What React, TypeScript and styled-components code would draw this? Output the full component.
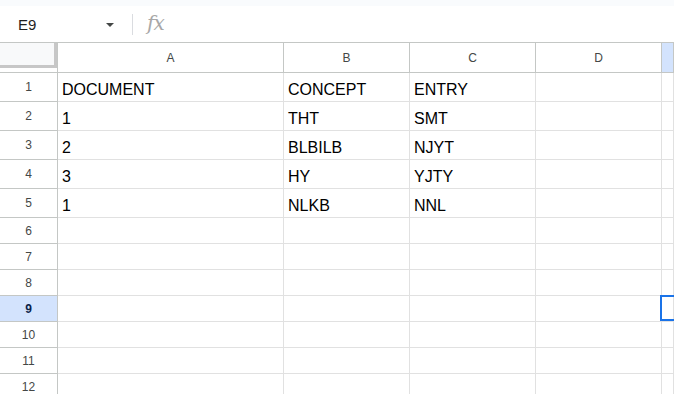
import React from "react";
import styled, { createGlobalStyle, css } from "styled-components";

const Global = createGlobalStyle`
  html, body { margin: 0; padding: 0; background: #fff; overflow: hidden; }
  body { font-family: "Liberation Sans", Arial, sans-serif; }
`;

const Page = styled.div`
  width: 674px;
  height: 394px;
  overflow: hidden;
  display: flex;
  flex-direction: column;
`;

const TopStrip = styled.div`
  height: 6px;
  background: #f9fbfd;
  flex: none;
`;

const FormulaBar = styled.div`
  height: 37px;
  box-sizing: border-box;
  border-bottom: 1px solid #c4c7c5;
  display: flex;
  align-items: center;
  flex: none;
`;

const NameBox = styled.div`
  width: 132px;
  box-sizing: border-box;
  padding-left: 18px;
  padding-right: 18px;
  display: flex;
  align-items: center;
  justify-content: space-between;
  font-family: "Liberation Sans", Arial, sans-serif;
  font-size: 15px;
  color: #1f1f1f;
`;

const Caret = styled.span`
  width: 0;
  height: 0;
  border-left: 4px solid transparent;
  border-right: 4px solid transparent;
  border-top: 4px solid #444746;
  margin-top: 1px;
`;

const Divider = styled.div`
  width: 1px;
  height: 21px;
  background: #dadce0;
`;

const Fx = styled.span`
  margin-left: 14px;
  font-family: "DejaVu Serif", "Liberation Serif", serif;
  font-style: italic;
  font-size: 20px;
  color: #a8a8a8;
  letter-spacing: -1px;
  line-height: 1;
  margin-top: -2px;
`;

const Grid = styled.div`
  display: grid;
  grid-template-columns: 58px 226px 126px 126px 126px 1fr;
  grid-template-rows: 30px repeat(5, 29px) repeat(7, 26px);
  flex: none;
`;

const headerBorder = "#c4c7c5";
const gridBorder = "#e1e1e1";

const Corner = styled.div`
  box-sizing: border-box;
  border-right: 1px solid ${headerBorder};
  border-bottom: 1px solid ${headerBorder};
`;

const CornerBox = styled.div`
  width: 57px;
  height: 25px;
  box-sizing: border-box;
  background: #f8f9fa;
  border-right: 3px solid #c7c7c7;
  border-bottom: 3px solid #c7c7c7;
`;

const ColHeader = styled.div<{ $active?: boolean }>`
  box-sizing: border-box;
  border-right: 1px solid ${headerBorder};
  border-bottom: 1px solid ${headerBorder};
  display: flex;
  align-items: center;
  justify-content: center;
  font-size: 12px;
  color: #444746;
  background: ${(p) => (p.$active ? "#d3e3fd" : "#fff")};
  padding-top: 1px;
`;

const RowHeader = styled.div<{ $active?: boolean }>`
  box-sizing: border-box;
  border-right: 1px solid ${headerBorder};
  border-bottom: 1px solid ${headerBorder};
  display: flex;
  align-items: center;
  justify-content: center;
  font-size: 12px;
  color: #444746;
  ${(p) =>
    p.$active &&
    css`
      background: #d3e3fd;
      color: #0b1f49;
      font-weight: bold;
    `}
`;

const Cell = styled.div<{ $selected?: boolean }>`
  position: relative;
  box-sizing: border-box;
  border-right: 1px solid ${gridBorder};
  border-bottom: 1px solid ${gridBorder};
  display: flex;
  align-items: flex-end;
  padding: 0 4px 2px 4px;
  font-size: 16px;
  color: #000;
  white-space: nowrap;
  ${(p) =>
    p.$selected &&
    css`
      &::after {
        content: "";
        position: absolute;
        top: -1px;
        left: -2px;
        right: -4px;
        bottom: 0;
        border: 2px solid #1a73e8;
      }
    `}
`;

const columns = ["A", "B", "C", "D", ""];
const data: string[][] = [
  ["DOCUMENT", "CONCEPT", "ENTRY", "", ""],
  ["1", "THT", "SMT", "", ""],
  ["2", "BLBILB", "NJYT", "", ""],
  ["3", "HY", "YJTY", "", ""],
  ["1", "NLKB", "NNL", "", ""],
];

export default function App() {
  const rows = Array.from({ length: 12 }, (_, i) => data[i] ?? ["", "", "", "", ""]);
  return (
    <Page>
      <Global />
      <TopStrip />
      <FormulaBar>
        <NameBox>
          <span>E9</span>
          <Caret />
        </NameBox>
        <Divider />
        <Fx>fx</Fx>
      </FormulaBar>
      <Grid>
        <Corner>
          <CornerBox />
        </Corner>
        {columns.map((c, i) => (
          <ColHeader key={i} $active={i === 4}>
            {c}
          </ColHeader>
        ))}
        {rows.map((r, ri) => (
          <React.Fragment key={ri}>
            <RowHeader $active={ri === 8}>{ri + 1}</RowHeader>
            {r.map((v, ci) => (
              <Cell key={ci} $selected={ri === 8 && ci === 4}>
                {v}
              </Cell>
            ))}
          </React.Fragment>
        ))}
      </Grid>
    </Page>
  );
}
